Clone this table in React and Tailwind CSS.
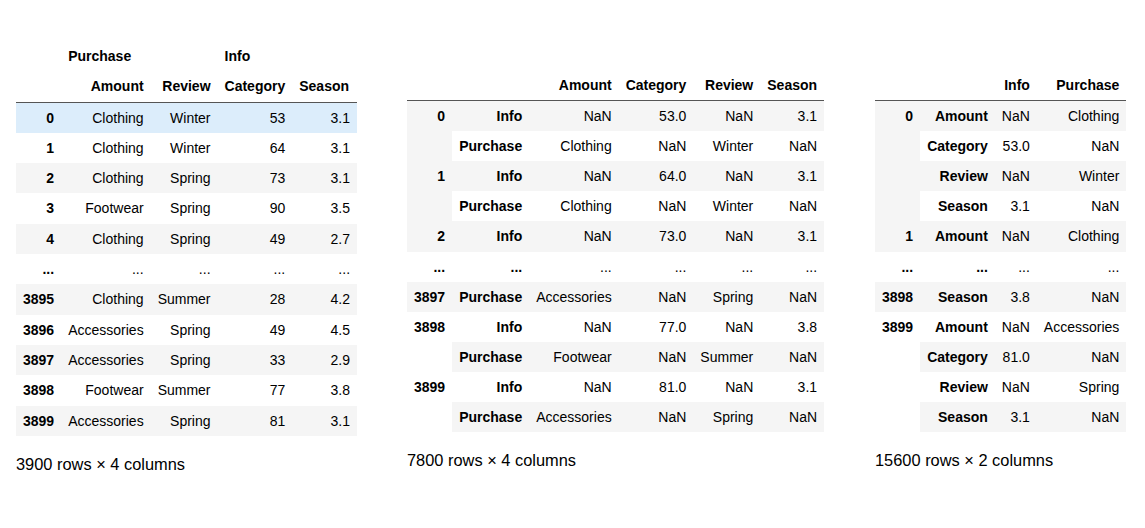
import React from 'react';

const font = { fontFamily: '"Liberation Sans", Arial, sans-serif' };

// first frame: plain 4-column frame with two-level header
const firstRows = [
    ['0', 'Clothing', 'Winter', '53', '3.1'],
    ['1', 'Clothing', 'Winter', '64', '3.1'],
    ['2', 'Clothing', 'Spring', '73', '3.1'],
    ['3', 'Footwear', 'Spring', '90', '3.5'],
    ['4', 'Clothing', 'Spring', '49', '2.7'],
    ['...', '...', '...', '...', '...'],
    ['3895', 'Clothing', 'Summer', '28', '4.2'],
    ['3896', 'Accessories', 'Spring', '49', '4.5'],
    ['3897', 'Accessories', 'Spring', '33', '2.9'],
    ['3898', 'Footwear', 'Summer', '77', '3.8'],
    ['3899', 'Accessories', 'Spring', '81', '3.1'],
];

// stacked frame: index + level, spans give the rowspan of the outer index
const stackedRows = [
    { idx: '0', span: 2, lvl: 'Info', vals: ['NaN', '53.0', 'NaN', '3.1'] },
    { lvl: 'Purchase', vals: ['Clothing', 'NaN', 'Winter', 'NaN'] },
    { idx: '1', span: 2, lvl: 'Info', vals: ['NaN', '64.0', 'NaN', '3.1'] },
    { lvl: 'Purchase', vals: ['Clothing', 'NaN', 'Winter', 'NaN'] },
    { idx: '2', span: 1, lvl: 'Info', vals: ['NaN', '73.0', 'NaN', '3.1'] },
    { idx: '...', span: 1, lvl: '...', vals: ['...', '...', '...', '...'] },
    { idx: '3897', span: 1, lvl: 'Purchase', vals: ['Accessories', 'NaN', 'Spring', 'NaN'] },
    { idx: '3898', span: 2, lvl: 'Info', vals: ['NaN', '77.0', 'NaN', '3.8'] },
    { lvl: 'Purchase', vals: ['Footwear', 'NaN', 'Summer', 'NaN'] },
    { idx: '3899', span: 2, lvl: 'Info', vals: ['NaN', '81.0', 'NaN', '3.1'] },
    { lvl: 'Purchase', vals: ['Accessories', 'NaN', 'Spring', 'NaN'] },
];

const longRows = [
    { idx: '0', span: 4, lvl: 'Amount', vals: ['NaN', 'Clothing'] },
    { lvl: 'Category', vals: ['53.0', 'NaN'] },
    { lvl: 'Review', vals: ['NaN', 'Winter'] },
    { lvl: 'Season', vals: ['3.1', 'NaN'] },
    { idx: '1', span: 1, lvl: 'Amount', vals: ['NaN', 'Clothing'] },
    { idx: '...', span: 1, lvl: '...', vals: ['...', '...'] },
    { idx: '3898', span: 1, lvl: 'Season', vals: ['3.8', 'NaN'] },
    { idx: '3899', span: 4, lvl: 'Amount', vals: ['NaN', 'Accessories'] },
    { lvl: 'Category', vals: ['81.0', 'NaN'] },
    { lvl: 'Review', vals: ['NaN', 'Spring'] },
    { lvl: 'Season', vals: ['3.1', 'NaN'] },
];

const stripe = (i) => (i % 2 === 0 ? 'bg-[#f5f5f5]' : 'bg-white');

const Th = ({ children, left = false, className = '', ...rest }) => (
    <th
        className={`px-[7px] py-[7px] font-bold align-top whitespace-nowrap ${left ? 'text-left' : 'text-right'} ${className}`}
        {...rest}
    >
        {children}
    </th>
);

const Td = ({ children, className = '' }) => (
    <td className={`px-[7px] py-[7px] text-right whitespace-nowrap ${className}`}>{children}</td>
);

const Caption = ({ children }) => (
    <p className="mt-[19px] text-[16.4px] leading-[18px] text-black">{children}</p>
);

const FirstFrame = () => (
    <div className="w-[391px] shrink-0 pt-[41px]">
        <table className="border-collapse text-[14px] leading-[16.3px] text-black">
            <thead className="border-b border-[#555]">
                <tr>
                    <Th></Th>
                    <Th colSpan={2} left>Purchase</Th>
                    <Th colSpan={2} left>Info</Th>
                </tr>
                <tr>
                    <Th></Th>
                    <Th>Amount</Th>
                    <Th>Review</Th>
                    <Th>Category</Th>
                    <Th className="pr-[8px]">Season</Th>
                </tr>
            </thead>
            <tbody>
                {firstRows.map((row, i) => {
                    const bg = i === 0 ? 'bg-[#dcedfb]' : stripe(i);
                    return (
                        <tr key={i} className={bg}>
                            <Th>{row[0]}</Th>
                            {row.slice(1).map((v, j) => (
                                <Td key={j}>{v}</Td>
                            ))}
                        </tr>
                    );
                })}
            </tbody>
        </table>
        <Caption>3900 rows × 4 columns</Caption>
    </div>
);

const StackedFrame = ({ columns, rows, caption, width }) => (
    <div className={`${width} shrink-0 pt-[70px]`}>
        <table className="border-collapse text-[14px] leading-[16.1px] text-black">
            <thead className="border-b border-[#555]">
                <tr>
                    <Th></Th>
                    <Th></Th>
                    {columns.map((c) => (
                        <Th key={c}>{c}</Th>
                    ))}
                </tr>
            </thead>
            <tbody>
                {rows.map((row, i) => {
                    const bg = stripe(i);
                    return (
                        <tr key={i}>
                            {row.idx && (
                                <Th rowSpan={row.span} className={bg}>
                                    {row.idx}
                                </Th>
                            )}
                            <Th className={bg}>{row.lvl}</Th>
                            {row.vals.map((v, j) => (
                                <Td key={j} className={bg}>{v}</Td>
                            ))}
                        </tr>
                    );
                })}
            </tbody>
        </table>
        <Caption>{caption}</Caption>
    </div>
);

const App = () => {
    return (
        <div className="w-[1145px] h-[528px] bg-white overflow-hidden" style={font}>
            <div className="flex items-start pl-[16px]">
                <FirstFrame />
                <StackedFrame
                    columns={['Amount', 'Category', 'Review', 'Season']}
                    rows={stackedRows}
                    caption="7800 rows × 4 columns"
                    width="w-[468px]"
                />
                <StackedFrame
                    columns={['Info', 'Purchase']}
                    rows={longRows}
                    caption="15600 rows × 2 columns"
                    width="w-[270px]"
                />
            </div>
        </div>
    );
};

export default App;
